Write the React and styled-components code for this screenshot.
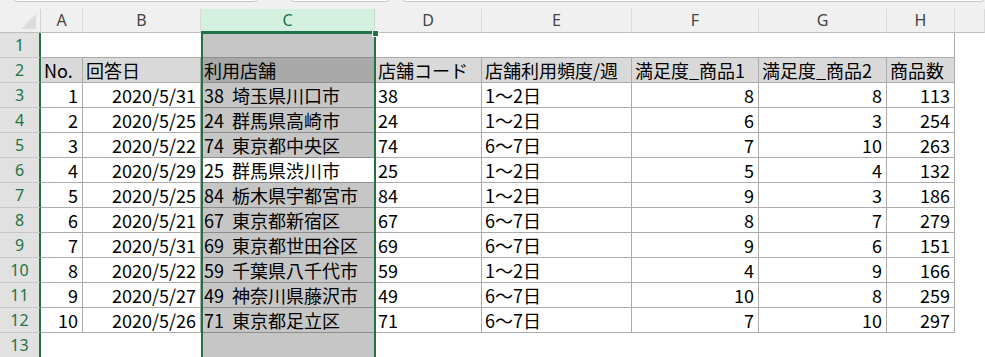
import React from "react";
import styled, { createGlobalStyle } from "styled-components";

const GlobalStyle = createGlobalStyle`
  html, body {
    margin: 0;
    padding: 0;
    background: #ffffff;
    overflow: hidden;
  }
  body {
    font-family: "Noto Sans CJK JP", "Noto Sans", sans-serif;
  }
`;

const GREEN = "#217346";

const TopBar = styled.div`
  height: 9px;
  background: #f0f0f0;
  display: flex;
  overflow: hidden;
  padding: 0 0 0 13px;
`;

const BarBox = styled.div`
  width: ${(p) => p.$w}px;
  flex: ${(p) => (p.$grow ? "1" : "none")};
  margin-left: ${(p) => p.$ml || 0}px;
  height: 22px;
  margin-top: -20px;
  background: #ffffff;
  border: 1px solid #c6c6c6;
  border-radius: 4px;
  box-sizing: border-box;
`;

const Sheet = styled.div`
  position: relative;
  display: grid;
  grid-template-columns: 41px 42px 118px 174px 107px 150px 127px 128px 68px 1fr;
  grid-template-rows: 24px repeat(13, 25px);
`;

const Corner = styled.div`
  position: relative;
  background: #f0f0f0;
  border-bottom: 1px solid #bdbdbd;
  border-right: 1px solid #d4d4d4;
  box-sizing: border-box;

  &::after {
    content: "";
    position: absolute;
    right: 4px;
    bottom: 3px;
    width: 15px;
    height: 15px;
    background: #dcdcdc;
    clip-path: polygon(100% 0, 100% 100%, 0 100%);
  }
`;

const ColHead = styled.div`
  background: ${(p) => (p.$selected ? "#d3f0e0" : "#f0f0f0")};
  color: ${(p) => (p.$selected ? GREEN : "#444444")};
  border-bottom: ${(p) => (p.$selected ? `2px solid ${GREEN}` : "1px solid #bdbdbd")};
  border-right: 1px solid ${(p) => (p.$selected ? "#c0dccb" : "#dadada")};
  box-sizing: border-box;
  font-family: "Noto Sans", sans-serif;
  font-size: 16px;
  line-height: 23px;
  text-align: center;
`;

const RowHead = styled.div`
  background: #e1e1e1;
  color: ${GREEN};
  border-right: 2px solid ${GREEN};
  border-bottom: 1px solid #c6c6c6;
  box-sizing: border-box;
  font-family: "Noto Sans", sans-serif;
  font-size: 16px;
  line-height: 24px;
  text-align: center;
`;

const Cell = styled.div`
  box-sizing: border-box;
  background: ${(p) => p.$bg};
  border-right: ${(p) => (p.$right ? `1px solid ${p.$line}` : "none")};
  border-bottom: ${(p) => (p.$bottom ? `1px solid ${p.$line}` : "none")};
  padding: 0 4px 0 3px;
  color: #000000;
  font-size: 18px;
  line-height: 24px;
  text-align: ${(p) => p.$align};
  white-space: pre;
  overflow: hidden;
`;

const Selection = styled.div`
  position: absolute;
  grid-column: 4 / 5;
  grid-row: 2 / 15;
  top: -1px;
  left: 0;
  right: -1px;
  bottom: -4px;
  border: 2px solid ${GREEN};
  pointer-events: none;
`;

const FillHandle = styled.div`
  position: absolute;
  top: -4px;
  right: -5px;
  width: 5px;
  height: 5px;
  background: ${GREEN};
  border: 1px solid #ffffff;
`;

const columns = ["A", "B", "C", "D", "E", "F", "G", "H", ""];
const align = ["right", "right", "left", "left", "left", "right", "right", "right"];

const header = ["No.", "回答日", "利用店舗", "店舗コード", "店舗利用頻度/週", "満足度_商品1", "満足度_商品2", "商品数"];

const data = [
  [1, "2020/5/31", "38 埼玉県川口市", 38, "1～2日", 8, 8, 113],
  [2, "2020/5/25", "24 群馬県高崎市", 24, "1～2日", 6, 3, 254],
  [3, "2020/5/22", "74 東京都中央区", 74, "6～7日", 7, 10, 263],
  [4, "2020/5/29", "25 群馬県渋川市", 25, "1～2日", 5, 4, 132],
  [5, "2020/5/25", "84 栃木県宇都宮市", 84, "1～2日", 9, 3, 186],
  [6, "2020/5/21", "67 東京都新宿区", 67, "6～7日", 8, 7, 279],
  [7, "2020/5/31", "69 東京都世田谷区", 69, "6～7日", 9, 6, 151],
  [8, "2020/5/22", "59 千葉県八千代市", 59, "1～2日", 4, 9, 166],
  [9, "2020/5/27", "49 神奈川県藤沢市", 49, "6～7日", 10, 8, 259],
  [10, "2020/5/26", "71 東京都足立区", 71, "6～7日", 7, 10, 297],
];

// rows 1..13 of the sheet
const rows = [Array(8).fill(""), header, ...data, Array(8).fill("")];

const cellProps = (r, c) => {
  const selected = c === 2;
  const active = selected && r === 6;
  const inTable = r >= 2 && r <= 12;
  const headerRow = r === 2;

  let bg = headerRow ? "#d9d9d9" : "#ffffff";
  if (selected && !active) bg = headerRow ? "#a9a9a9" : "#c6c6c6";

  return {
    $bg: bg,
    $line: selected ? "#8e8e8e" : "#ababab",
    $right: inTable || (r === 1 && c === 7),
    $bottom: r === 1 || inTable,
    $align: headerRow ? "left" : align[c],
  };
};

const App = () => {
  return (
    <>
      <GlobalStyle />
      <TopBar>
        <BarBox $w={245} />
        <BarBox $w={100} $ml={32} />
        <BarBox $grow $ml={12} />
      </TopBar>
      <Sheet>
        <Corner />
        {columns.map((col, i) => (
          <ColHead key={i} $selected={col === "C"}>
            {col}
          </ColHead>
        ))}
        {rows.map((row, r) => (
          <React.Fragment key={r}>
            <RowHead>{r + 1}</RowHead>
            {row.map((value, c) => (
              <Cell key={c} {...cellProps(r + 1, c)}>
                {c === 2 && typeof value === "string" ? value.replace(" ", "  ") : value}
              </Cell>
            ))}
            <Cell $bg="#ffffff" $align="left" />
          </React.Fragment>
        ))}
        <Selection>
          <FillHandle />
        </Selection>
      </Sheet>
    </>
  );
};

export default App;
